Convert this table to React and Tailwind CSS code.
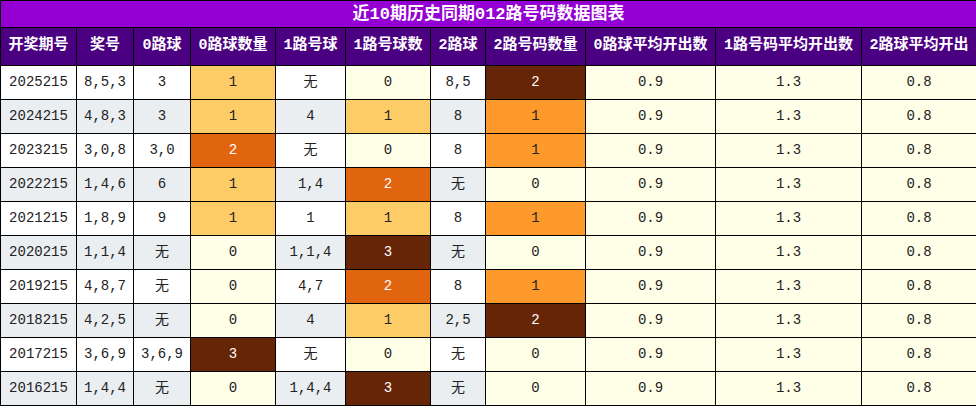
const rows = [
  ["2025215", "8,5,3", "3", 1, "无", 0, "8,5", 2],
  ["2024215", "4,8,3", "3", 1, "4", 1, "8", 1],
  ["2023215", "3,0,8", "3,0", 2, "无", 0, "8", 1],
  ["2022215", "1,4,6", "6", 1, "1,4", 2, "无", 0],
  ["2021215", "1,8,9", "9", 1, "1", 1, "8", 1],
  ["2020215", "1,1,4", "无", 0, "1,1,4", 3, "无", 0],
  ["2019215", "4,8,7", "无", 0, "4,7", 2, "8", 1],
  ["2018215", "4,2,5", "无", 0, "4", 1, "2,5", 2],
  ["2017215", "3,6,9", "3,6,9", 3, "无", 0, "无", 0],
  ["2016215", "1,4,4", "无", 0, "1,4,4", 3, "无", 0],
];

const headers = [
  "开奖期号",
  "奖号",
  "0路球",
  "0路球数量",
  "1路号球",
  "1路号球数",
  "2路球",
  "2路号码数量",
  "0路球平均开出数",
  "1路号码平均开出数",
  "2路球平均开出",
];

const widths = [76, 57, 57, 85, 70, 85, 55, 100, 130, 146, 115];

// 0路 / 1路 count colours
const countColor = {
  0: "bg-[#fffee6] text-[#222]",
  1: "bg-[#fecc66] text-[#222]",
  2: "bg-[#e1640f] text-white",
  3: "bg-[#662506] text-white",
};

// 2路 count colours
const count2Color = {
  0: "bg-[#fffee6] text-[#222]",
  1: "bg-[#fd9a2b] text-[#222]",
  2: "bg-[#662506] text-white",
};

export default function App() {
  return (
    <div className="w-[976px] bg-white font-['Liberation_Mono','Noto_Sans_CJK_SC',monospace]">
      <table className="w-[976px] table-fixed border-collapse border border-black text-center">
        <colgroup>
          {widths.map((w, i) => (
            <col key={i} style={{ width: w }} />
          ))}
        </colgroup>
        <thead>
          <tr className="h-[27px] bg-[#9400d3]">
            <th
              colSpan={11}
              className="border border-black text-[17px] font-bold leading-none text-white"
            >
              近10期历史同期012路号码数据图表
            </th>
          </tr>
          <tr className="h-[38px] bg-[#4b0082]">
            {headers.map((h) => (
              <th
                key={h}
                className="whitespace-nowrap border border-black px-0 text-[15px] font-bold text-white"
              >
                {h}
              </th>
            ))}
          </tr>
        </thead>
        <tbody className="text-[14px] text-[#222]">
          {rows.map((r, i) => {
            const base = i % 2 === 0 ? "bg-white" : "bg-[#ebeef1]";
            return (
              <tr key={r[0]} className="h-[34px]">
                <td className={`border border-black ${base}`}>{r[0]}</td>
                <td className={`border border-black ${base}`}>{r[1]}</td>
                <td className={`border border-black ${base}`}>{r[2]}</td>
                <td className={`border border-black ${countColor[r[3]]}`}>{r[3]}</td>
                <td className={`border border-black ${base}`}>{r[4]}</td>
                <td className={`border border-black ${countColor[r[5]]}`}>{r[5]}</td>
                <td className={`border border-black ${base}`}>{r[6]}</td>
                <td className={`border border-black ${count2Color[r[7]]}`}>{r[7]}</td>
                <td className="border border-black bg-[#fffee6]">0.9</td>
                <td className="border border-black bg-[#fffee6]">1.3</td>
                <td className="border border-black bg-[#fffee6]">0.8</td>
              </tr>
            );
          })}
        </tbody>
      </table>
    </div>
  );
}
